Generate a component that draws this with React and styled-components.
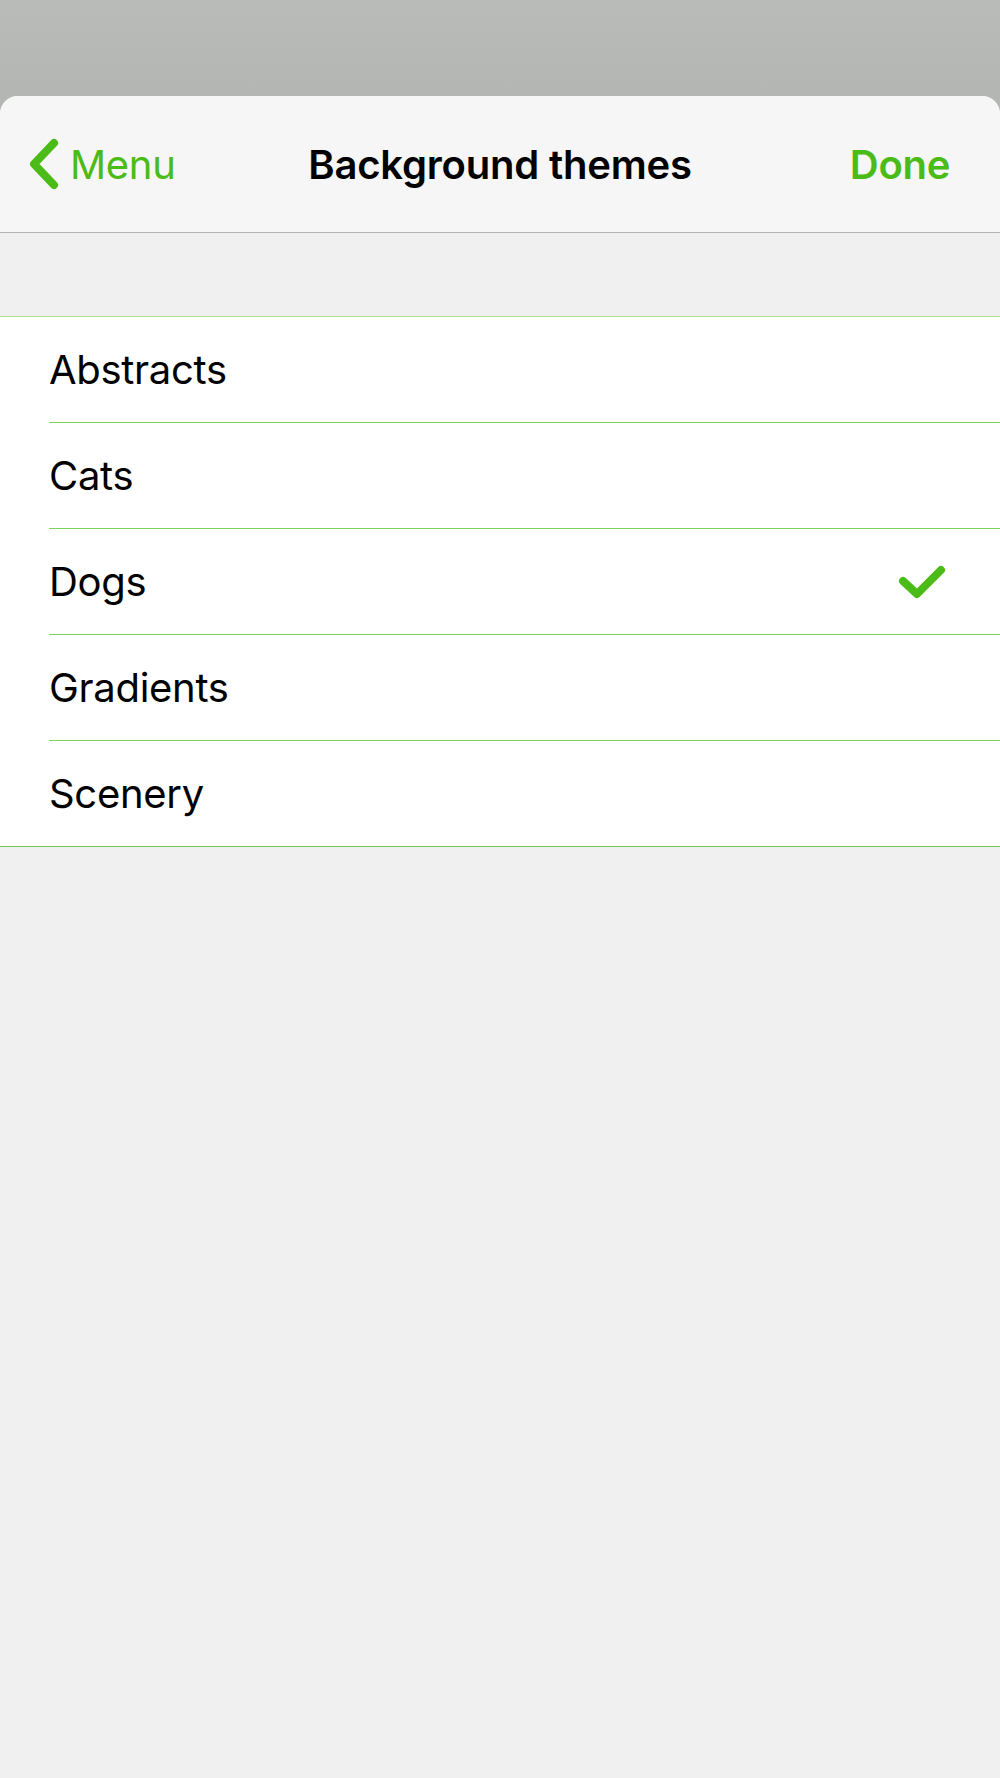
import React from 'react';
import styled, { createGlobalStyle } from 'styled-components';

const themes = ['Abstracts', 'Cats', 'Dogs', 'Gradients', 'Scenery'];
const selected = 'Dogs';

export default function App() {
  return (
    <Page>
      <GlobalStyle />
      <Sheet>
        <NavBar>
          <BackButton>
            <svg width="32" height="52" viewBox="0 0 32 52">
              <polyline
                points="26,5 6,26 26,47"
                fill="none"
                stroke="#4bbb17"
                strokeWidth="8"
                strokeLinecap="round"
                strokeLinejoin="round"
              />
            </svg>
            Menu
          </BackButton>
          <Title>Background themes</Title>
          <DoneButton>Done</DoneButton>
        </NavBar>
        <Spacer />
        <List>
          {themes.map((name) => (
            <Row key={name}>
              <Label>{name}</Label>
              {name === selected && (
                <svg width="48" height="38" viewBox="0 0 48 38">
                  <polyline
                    points="5,18 19,31 43,7"
                    fill="none"
                    stroke="#4bbb17"
                    strokeWidth="8"
                    strokeLinecap="round"
                    strokeLinejoin="round"
                  />
                </svg>
              )}
            </Row>
          ))}
        </List>
      </Sheet>
    </Page>
  );
}

const GlobalStyle = createGlobalStyle`
  body {
    margin: 0;
    background: #efefef;
    font-family: Inter, 'Liberation Sans', sans-serif;
  }
`;

const Page = styled.div`
  padding-top: 96px;
  background: linear-gradient(#b9bbb8, #b3b5b2 120px);
`;

const Sheet = styled.div`
  background: #f0f0f0;
  border-radius: 18px 18px 0 0;
  min-height: 1682px;
  overflow: hidden;
`;

const NavBar = styled.div`
  height: 137px;
  box-sizing: border-box;
  display: grid;
  grid-template-columns: 1fr auto 1fr;
  align-items: center;
  padding: 0 50px;
  background: #f6f6f6;
  border-bottom: 1px solid #b4b4b4;
`;

const BackButton = styled.div`
  display: flex;
  align-items: center;
  gap: 10px;
  margin-left: -22px;
  color: #4bbb17;
  font-size: 40px;
  letter-spacing: -0.3px;
`;

const Title = styled.div`
  font-size: 40px;
  font-weight: 600;
  color: #000;
  letter-spacing: -0.2px;
`;

const DoneButton = styled.div`
  justify-self: end;
  font-size: 40px;
  font-weight: 600;
  color: #4bbb17;
  letter-spacing: -0.3px;
`;

const Spacer = styled.div`
  height: 83px;
`;

const List = styled.div`
  background: #fff;
  border-top: 1px solid #a9e191;
  border-bottom: 1px solid #76c653;
  padding-left: 49px;
`;

const Row = styled.div`
  height: 105px;
  display: flex;
  align-items: center;
  justify-content: space-between;
  padding-right: 54px;
  & + & {
    border-top: 1px solid #7ed25a;
  }
`;

const Label = styled.span`
  font-size: 40px;
  color: #000;
  letter-spacing: -0.3px;
`;
